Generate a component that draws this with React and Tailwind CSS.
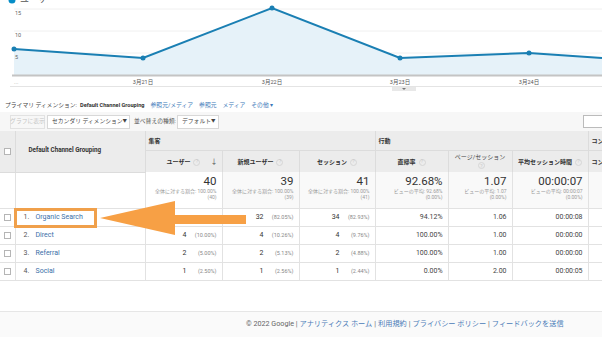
const font = "font-['Roboto','Noto_Sans_CJK_JP',sans-serif]";

const totals = [
  { big: "40", a: "全体に対する割合: 100.00%", b: "(40)", hl: true },
  { big: "39", a: "全体に対する割合: 100.00%", b: "(39)" },
  { big: "41", a: "全体に対する割合: 100.00%", b: "(41)" },
  { big: "92.68%", a: "ビューの平均: 92.68%", b: "(0.00%)" },
  { big: "1.07", a: "ビューの平均: 1.07", b: "(0.00%)" },
  { big: "00:00:07", a: "ビューの平均: 00:00:07", b: "(0.00%)" },
];

const rows = [
  { n: "1.", name: "Organic Search", u: ["", ""], nu: ["32", "(82.05%)"], s: ["34", "(82.93%)"], br: "94.12%", pv: "1.06", t: "00:00:08" },
  { n: "2.", name: "Direct", u: ["4", "(10.00%)"], nu: ["4", "(10.26%)"], s: ["4", "(9.76%)"], br: "100.00%", pv: "1.00", t: "00:00:00" },
  { n: "3.", name: "Referral", u: ["2", "(5.00%)"], nu: ["2", "(5.13%)"], s: ["2", "(4.88%)"], br: "100.00%", pv: "1.00", t: "00:00:00" },
  { n: "4.", name: "Social", u: ["1", "(2.50%)"], nu: ["1", "(2.56%)"], s: ["1", "(2.44%)"], br: "0.00%", pv: "2.00", t: "00:00:05" },
];

const Help = () => (
  <span className="inline-flex items-center justify-center w-[7px] h-[7px] rounded-full border border-[#d6d6d6] text-[5px] text-[#c8c8c8] ml-[3px] align-middle font-normal">?</span>
);

const Check = () => (
  <span className="block w-[7px] h-[7px] border border-[#b5b5b5] bg-white mx-auto" />
);

const Count = ({ v }) => (
  <div className="flex justify-end items-baseline pr-[5px]">
    <span className="text-[7px] text-[#333]">{v[0]}</span>
    <span className="w-[30px] text-right text-[5.5px] text-[#888]">{v[1]}</span>
  </div>
);

const Chart = () => {
  const pts = [[14, 49], [143, 58], [272, 8], [400, 58], [529, 53], [602, 58]];
  const line = pts.map((p) => p.join(",")).join(" ");
  return (
    <svg width="602" height="92" className="block">
      <circle cx="12" cy="0" r="3.5" fill="#058dc7" />
      <text x="20" y="2" fontSize="9" fill="#555">ユーザー</text>
      {[9, 31, 53].map((y) => (
        <line key={y} x1="14" x2="602" y1={y} y2={y} stroke="#f0f0f0" strokeWidth="1" />
      ))}
      <polygon points={`14,75 ${line} 602,75`} fill="#e6f2f9" />
      <polyline points={line} fill="none" stroke="#1a7fb3" strokeWidth="2" />
      {pts.slice(0, 5).map(([x, y]) => (
        <circle key={x} cx={x} cy={y} r="2.5" fill="#1a7fb3" />
      ))}
      <text x="15" y="15" fontSize="5.5" fill="#666">15</text>
      <text x="15" y="37" fontSize="5.5" fill="#666">10</text>
      <text x="15" y="59" fontSize="5.5" fill="#666">5</text>
      <line x1="12" x2="602" y1="75.5" y2="75.5" stroke="#c4c4c4" strokeWidth="2" />
      <text x="14" y="84" fontSize="5.5" fill="#999">...</text>
      {[["3月21日", 143], ["3月22日", 272], ["3月23日", 400], ["3月24日", 529]].map(([d, x]) => (
        <text key={d} x={x} y="84" fontSize="5.5" fill="#555" textAnchor="middle">{d}</text>
      ))}
      <line x1="10" x2="602" y1="86.5" y2="86.5" stroke="#e4e4e4" strokeWidth="1" />
      <rect x="392" y="87" width="24" height="4" fill="#e8e8e8" />
      <path d="M402 88 L406 88 L404 90 Z" fill="#777" />
    </svg>
  );
};

export default function App() {
  return (
    <div className={`${font} w-[602px] h-[337px] overflow-hidden bg-white text-[#333] flex flex-col`}>
      <Chart />

      <div className="h-[20px] flex items-center pt-[6px] px-[5px] text-[5.8px] whitespace-nowrap">
        <span className="text-[#444]">プライマリ ディメンション:</span>
        <span className="font-bold text-[#333] text-[5.6px] ml-[3px]">Default Channel Grouping</span>
        <span className="text-[#3b78b8] ml-[6px]">参照元/メディア</span>
        <span className="text-[#3b78b8] ml-[6px]">参照元</span>
        <span className="text-[#3b78b8] ml-[6px]">メディア</span>
        <span className="text-[#3b78b8] ml-[6px]">その他 ▾</span>
      </div>

      <div className="h-[19px] flex items-center gap-[2px] pl-[10px] text-[5.8px] bg-[#f7f7f7] whitespace-nowrap">
        <span className="h-[14px] w-[35px] flex items-center justify-center border border-[#e2e2e2] bg-[#f7f7f7] text-[#c4c4c4]">グラフに表示</span>
        <span className="h-[14px] w-[83px] px-[4px] flex items-center justify-between border border-[#d8d8d8] bg-white text-[#444]">
          セカンダリ ディメンション <span className="text-[4.5px]">▼</span>
        </span>
        <span className="w-[43px] pl-[2px] text-[#555]">並べ替えの種類:</span>
        <span className="h-[14px] w-[42px] px-[4px] flex items-center justify-between border border-[#d8d8d8] bg-white text-[#444]">
          デフォルト <span className="text-[4.5px]">▼</span>
        </span>
        <span className="ml-auto h-[13px] w-[22px] border border-[#bbb] bg-white -mr-[3px]" />
      </div>

      <div className="relative h-[150px]">
        <table className="table-fixed border-collapse w-[640px]">
          <colgroup>
            <col className="w-[15px]" />
            <col className="w-[130px]" />
            <col className="w-[77px]" />
            <col className="w-[77px]" />
            <col className="w-[76px]" />
            <col className="w-[73px]" />
            <col className="w-[64px]" />
            <col className="w-[76px]" />
            <col className="w-[52px]" />
          </colgroup>
          <thead>
            <tr className="h-[19px] bg-[#ececec] text-[6px] font-bold text-[#333]">
              <th rowSpan={2} className="border-r border-[#dcdcdc] border-b border-b-[#dcdcdc]"><Check /></th>
              <th rowSpan={2} className="border-r border-[#dcdcdc] border-b border-b-[#dcdcdc] text-left pl-[13px] pb-[2px] text-[6.3px]">Default Channel Grouping</th>
              <th colSpan={3} className="border-r border-[#dcdcdc] border-b border-b-[#dcdcdc] text-left pl-[3px]">集客</th>
              <th colSpan={3} className="border-r border-[#dcdcdc] border-b border-b-[#dcdcdc] text-left pl-[3px]">行動</th>
              <th className="border-b border-[#dcdcdc] text-left pl-[3px] whitespace-nowrap">コンバージョン</th>
            </tr>
            <tr className="h-[22px] bg-[#ececec] text-[6px] font-bold text-[#333]">
              <th className="border-r border-[#dcdcdc] relative">
                ユーザー<Help />
                <span className="absolute right-[4px] top-[6px] text-[7px] font-normal text-[#555]">↓</span>
              </th>
              <th className="border-r border-[#dcdcdc]">新規ユーザー<Help /></th>
              <th className="border-r border-[#dcdcdc]">セッション<Help /></th>
              <th className="border-r border-[#dcdcdc]">直帰率<Help /></th>
              <th className="border-r border-[#dcdcdc] font-normal leading-[8px] text-[#444]">
                ページ/セッション<br /><Help />
              </th>
              <th className="border-r border-[#dcdcdc] whitespace-nowrap">平均セッション時間<Help /></th>
              <th className="text-left pl-[3px] whitespace-nowrap">コンバージョン</th>
            </tr>
          </thead>
          <tbody>
            <tr className="h-[36px] border-b border-[#e2e2e2]">
              <td className="border-r border-[#e2e2e2] bg-white" />
              <td className="border-r border-[#e2e2e2] bg-white" />
              {totals.map((t) => (
                <td
                  key={t.big}
                  className={`border-r border-[#e2e2e2] text-right pr-[5px] align-top pt-[3px] ${t.hl ? "bg-white" : "bg-[#f9f9f9]"}`}
                >
                  <div className="text-[11.5px] leading-[12px] text-[#333]">{t.big}</div>
                  <div className="text-[5px] leading-[6px] text-[#999] mt-[1px] whitespace-nowrap">{t.a}</div>
                  <div className="text-[5px] leading-[6px] text-[#999]">{t.b}</div>
                </td>
              ))}
              <td className="bg-[#f9f9f9]" />
            </tr>
            {rows.map((r) => (
              <tr key={r.n} className="h-[18px] border-b border-[#e2e2e2] text-[7px]">
                <td className="border-r border-[#e2e2e2]"><Check /></td>
                <td className="border-r border-[#e2e2e2]">
                  <span className="inline-block w-[20px] pl-[8px] text-[#555]">{r.n}</span>
                  <span className="text-[#3a6fa8]">{r.name}</span>
                </td>
                <td className="border-r border-[#e2e2e2]"><Count v={r.u} /></td>
                <td className="border-r border-[#e2e2e2]"><Count v={r.nu} /></td>
                <td className="border-r border-[#e2e2e2]"><Count v={r.s} /></td>
                <td className="border-r border-[#e2e2e2] text-right pr-[5px] text-[#444]">{r.br}</td>
                <td className="border-r border-[#e2e2e2] text-right pr-[5px] text-[#444]">{r.pv}</td>
                <td className="border-r border-[#e2e2e2] text-right pr-[5px] text-[#444]">{r.t}</td>
                <td />
              </tr>
            ))}
          </tbody>
        </table>

        <div className="absolute left-[14px] top-[77px] w-[83px] h-[20px] border-[3px] border-[#f0a04b]" />
        <svg className="absolute left-0 top-0" width="260" height="150">
          <polygon points="100,87 175,70 175,84 246,84 246,93 175,93 175,104" fill="#f7a045" />
        </svg>
      </div>

      <div className="mt-auto h-[26px] border-t border-[#e6e6e6] bg-[#fafafa] flex items-center pl-[246px] text-[7.2px] gap-[2px] whitespace-nowrap">
        <span className="text-[#666]">© 2022 Google |</span>
        <span className="text-[#4a7ab8]">アナリティクス ホーム</span>
        <span className="text-[#666]">|</span>
        <span className="text-[#4a7ab8]">利用規約</span>
        <span className="text-[#666]">|</span>
        <span className="text-[#4a7ab8]">プライバシー ポリシー</span>
        <span className="text-[#666]">|</span>
        <span className="text-[#4a7ab8]">フィードバックを送信</span>
      </div>
    </div>
  );
}
